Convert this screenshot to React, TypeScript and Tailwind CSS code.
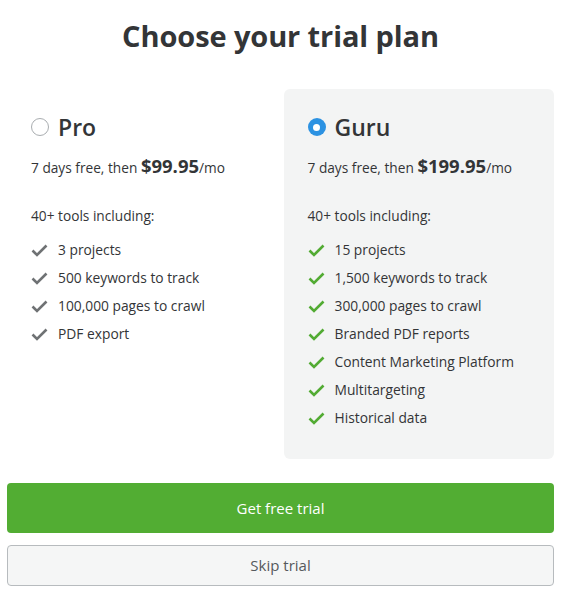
import React, { useState } from 'react'

type Plan = {
  id: 'pro' | 'guru'
  name: string
  price: string
  features: string[]
}

const plans: Plan[] = [
  {
    id: 'pro',
    name: 'Pro',
    price: '$99.95',
    features: ['3 projects', '500 keywords to track', '100,000 pages to crawl', 'PDF export'],
  },
  {
    id: 'guru',
    name: 'Guru',
    price: '$199.95',
    features: [
      '15 projects',
      '1,500 keywords to track',
      '300,000 pages to crawl',
      'Branded PDF reports',
      'Content Marketing Platform',
      'Multitargeting',
      'Historical data',
    ],
  },
]

function Check({ active }: { active: boolean }) {
  return (
    <svg
      width="17"
      height="13"
      viewBox="0 0 17 13"
      fill="none"
      className={active ? 'text-[#52ab33]' : 'text-[#6f7274]'}
    >
      <path d="M1.5 6.5 L6 11 L15.5 1.5" stroke="currentColor" strokeWidth="2.6" strokeLinecap="butt" />
    </svg>
  )
}

function Radio({ checked }: { checked: boolean }) {
  if (checked) {
    return (
      <span className="flex h-[18px] w-[18px] items-center justify-center rounded-full bg-[#2c92e2]">
        <span className="h-[7px] w-[7px] rounded-full bg-white" />
      </span>
    )
  }
  return <span className="h-[18px] w-[18px] rounded-full border border-[#a9adb0] bg-white" />
}

export default function App() {
  const [selected, setSelected] = useState<Plan['id']>('guru')

  return (
    <div
      className="w-[561px] bg-white px-[7px] pt-[18px] text-[#333537]"
      style={{ fontFamily: '"Open Sans", "Noto Sans", sans-serif' }}
    >
      <h1 className="text-center text-[29px] font-bold leading-[36px] tracking-[-0.1px]">
        Choose your trial plan
      </h1>

      <div className="mt-[35px] grid grid-cols-2 gap-[6px]">
        {plans.map((plan) => {
          const active = selected === plan.id
          return (
            <div
              key={plan.id}
              onClick={() => setSelected(plan.id)}
              className={
                'h-[370px] cursor-pointer rounded-[6px] pl-[24px] pr-4 pt-[23px] ' +
                (active ? 'bg-[#f3f4f4]' : 'bg-transparent')
              }
            >
              <div className="flex items-center gap-[9px]">
                <Radio checked={active} />
                <span className="text-[23px] font-semibold leading-[30px]">{plan.name}</span>
              </div>

              <p className="mt-[13px] text-[13.7px] leading-[22px]">
                7 days free, then <span className="text-[18.5px] font-bold">{plan.price}</span>/mo
              </p>

              <p className="mt-[27px] text-[13.7px] leading-[20px]">40+ tools including:</p>

              <ul className="mt-[10px]">
                {plan.features.map((f) => (
                  <li key={f} className="flex h-[28px] items-center gap-[10px] text-[13.8px]">
                    <Check active={active} />
                    <span>{f}</span>
                  </li>
                ))}
              </ul>
            </div>
          )
        })}
      </div>

      <button
        type="button"
        className="mt-[24px] flex h-[50px] w-full items-center justify-center rounded-[4px] bg-[#52ad33] text-[15px] text-white"
      >
        Get free trial
      </button>
      <button
        type="button"
        className="mt-[12px] flex h-[41px] w-full items-center justify-center rounded-[4px] border border-[#b7bbbe] bg-[#f5f6f6] text-[15px] text-[#55595c]"
      >
        Skip trial
      </button>
    </div>
  )
}
